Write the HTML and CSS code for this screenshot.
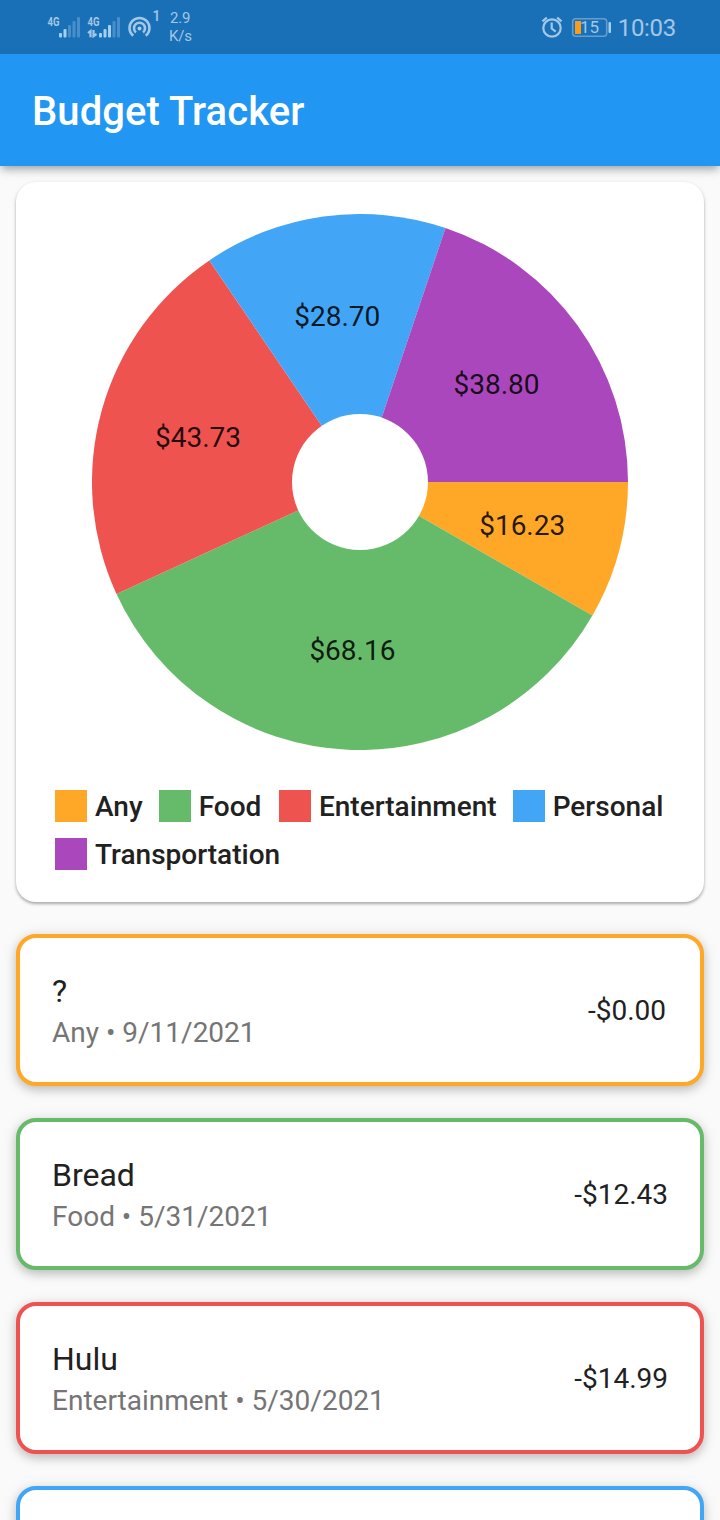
FILE: index.html
```html
<!DOCTYPE html>
<html lang="en">
<head>
<meta charset="utf-8">
<title>Budget Tracker</title>
<link rel="stylesheet" href="styles.css">
</head>
<body>
<div class="screen">
  <header class="header">
    <div class="status">
      <svg class="status-left" width="114" height="54" viewBox="0 0 114 54">
        <g class="net"><text x="0.5" y="26" textLength="12" lengthAdjust="spacingAndGlyphs">4G</text><text x="40.5" y="26" textLength="12" lengthAdjust="spacingAndGlyphs">4G</text></g>
        <g class="bar-on"><rect x="12" y="33" width="3" height="4.500" rx="1"/><rect x="16.500" y="29" width="3" height="8.500" rx="1"/><rect x="52" y="33" width="3" height="4.500" rx="1"/><rect x="56.500" y="29" width="3" height="8.500" rx="1"/><rect x="61" y="25" width="3" height="12.500" rx="1"/></g>
        <g class="bar-off"><rect x="21" y="25" width="3" height="12.500" rx="1"/><rect x="25.500" y="21" width="3" height="16.500" rx="1"/><rect x="30" y="17" width="3" height="20.500" rx="1"/><rect x="65.500" y="21" width="3" height="16.500" rx="1"/><rect x="70" y="17" width="3" height="20.500" rx="1"/></g>
        <path class="stroke" d="M41 33L43.500 31V37.200M46.500 30V36.200L49.500 34"/>
        <g class="stroke wave"><path d="M86.200 35.800A10 10 0 1 1 98.800 35.800"/><path d="M88.900 32.400A5.500 5.500 0 1 1 96.100 32.400"/></g>
        <circle class="bar-on" cx="92.500" cy="28.500" r="2"/>
        <text class="hotspot" x="105.500" y="21">1</text>
      </svg>
      <div class="speed"><span>2.9</span><span>K/s</span></div>
      <svg class="status-right" width="72" height="54" viewBox="0 0 72 54">
        <g class="stroke"><circle cx="12" cy="28" r="8.700"/><path d="M11.700 22.500v6l4 3.200M2.500 21.300l4.300-3.700M17.200 17.600l4.300 3.700"/></g>
        <rect class="battery" x="32.700" y="18.700" width="34" height="17.600" rx="3"/>
        <rect class="charge" x="35" y="21" width="6" height="13"/>
        <rect class="bar-on" x="68.500" y="22" width="2.500" height="11" rx="1"/>
        <text class="percent" x="40" y="33">15</text>
      </svg>
      <span class="clock">10:03</span>
    </div>
    <h1 class="title">Budget Tracker</h1>
  </header>
  <main class="content">
    <section class="chart-card">
      <svg class="pie" width="536" height="536" viewBox="-268 -268 536 536">
        <path class="f-any" d="M0 0H268A268 268 0 0 1 232.400 133.500Z"/>
        <path class="f-food" d="M0 0L232.400 133.500A268 268 0 0 1 -243.500 112Z"/>
        <path class="f-ent" d="M0 0L-243.500 112A268 268 0 0 1 -150.700 -221.600Z"/>
        <path class="f-per" d="M0 0L-150.700 -221.600A268 268 0 0 1 85.500 -254Z"/>
        <path class="f-tra" d="M0 0L85.500 -254A268 268 0 0 1 268 0Z"/>
        <circle class="hole" r="68"/>
        <g class="labels"><text x="162.200" y="53">$16.23</text><text x="-7.600" y="178">$68.16</text><text x="-162" y="-35">$43.73</text><text x="-22.700" y="-156">$28.70</text><text x="136.500" y="-88">$38.80</text></g>
      </svg>
      <div class="legend">
        <div class="key any"><i class="swatch"></i>Any</div>
        <div class="key food"><i class="swatch"></i>Food</div>
        <div class="key ent"><i class="swatch"></i>Entertainment</div>
        <div class="key per"><i class="swatch"></i>Personal</div>
        <div class="key tra"><i class="swatch"></i>Transportation</div>
      </div>
    </section>
    <article class="entry any"><div><div class="name">?</div><div class="meta">Any • 9/11/2021</div></div><div class="amount zero">-$0.00</div></article>
    <article class="entry food"><div><div class="name">Bread</div><div class="meta">Food • 5/31/2021</div></div><div class="amount">-$12.43</div></article>
    <article class="entry ent"><div><div class="name">Hulu</div><div class="meta">Entertainment • 5/30/2021</div></div><div class="amount">-$14.99</div></article>
    <article class="entry per"></article>
  </main>
</div>
</body>
</html>
```
FILE: styles.css
```css
* { box-sizing: border-box; }
body { margin: 0; font-family: Roboto, sans-serif; color: #212121; }
.screen { height: 1520px; overflow: hidden; background: #fafafa; display: flex; flex-direction: column; }
.header { flex: none; height: 166px; background: #2196f3; position: relative; box-shadow: 0 4px 8px -2px rgba(0,0,0,.3), 0 6px 10px rgba(0,0,0,.1); }
.status { height: 54px; background: #1a70b7; display: flex; align-items: center; padding: 0 44px 0 47px; color: #a3c7e6; }
.status-left { flex: none; }
.speed { margin-left: 8px; width: 30px; display: flex; flex-direction: column; align-items: flex-start; font-size: 15px; line-height: 18px; letter-spacing: -.2px; }
.speed span:first-child { padding-left: 1px; }
.status-right { margin-left: auto; }
.clock { margin-left: 6px; font-size: 24px; line-height: 28px; padding-top: 2px; letter-spacing: -.3px; }
.net { font-size: 13px; font-weight: 700; fill: #a3c7e6; }
.bar-on { fill: #a3d0f3; }
.bar-off { fill: #478fca; }
.stroke { fill: none; stroke: #a3c7e6; stroke-width: 2.200; }
.wave { stroke-width: 2.600; }
.hotspot { font-size: 14px; font-weight: 500; fill: #a3c7e6; }
.battery { fill: none; stroke: #669fcf; stroke-width: 1.500; }
.charge { fill: #fa9b1e; }
.percent { font-size: 17px; fill: #a3c7e6; }
.title { margin: 0; padding: 2px 0 0 32px; font-size: 40px; font-weight: 500; line-height: 112px; color: #fff; letter-spacing: .08px; }
.content { padding: 16px; display: flex; flex-direction: column; gap: 32px; }
.chart-card { height: 720px; flex: none; background: #fff; border-radius: 20px; padding: 32px 32px 0 39px; box-shadow: 0 2px 3px rgba(0,0,0,.28), 0 1px 5px rgba(0,0,0,.08); }
.pie { display: block; margin-left: 37px; }
.f-any { fill: #ffa726; }
.f-food { fill: #66bb6a; }
.f-ent { fill: #ef5350; }
.f-per { fill: #42a5f5; }
.f-tra { fill: #ab47bc; }
.hole { fill: #fff; }
.labels { font-size: 28px; fill: #000; fill-opacity: .87; text-anchor: middle; }
.legend { margin-top: 40px; display: flex; flex-wrap: wrap; gap: 16px; }
.key { display: flex; align-items: center; gap: 8px; height: 32px; font-size: 28px; font-weight: 500; white-space: nowrap; }
.key.food { margin-right: 1.6px; }
.swatch { width: 32px; height: 32px; background: var(--tone); }
.any { --tone: #ffa726; }
.food { --tone: #66bb6a; }
.ent { --tone: #ef5350; }
.per { --tone: #42a5f5; }
.tra { --tone: #ab47bc; }
.entry { flex: none; height: 152px; border: 4px solid var(--tone); border-radius: 20px; background: #fff; padding: 0 32px; display: flex; justify-content: space-between; align-items: center; box-shadow: 0 4px 10px rgba(0,0,0,.18), 0 2px 16px rgba(0,0,0,.1); }
.name { font-size: 32px; line-height: 38px; padding-top: 1px; }
.meta { font-size: 28px; line-height: 34px; margin-top: 6px; color: #757575; }
.amount { font-size: 28px; }
.zero { padding-right: 2px; }
```
